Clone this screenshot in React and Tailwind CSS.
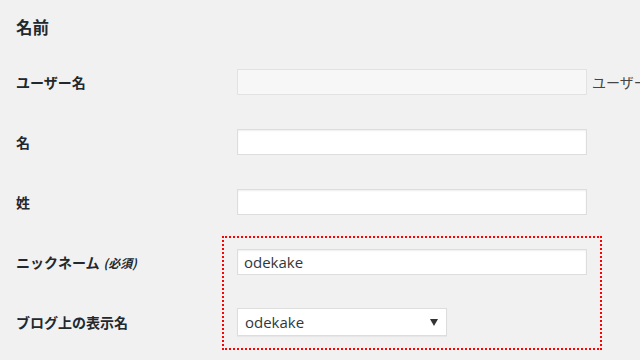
export default function App() {
  const rows = [
    { label: 'ユーザー名', kind: 'disabled' },
    { label: '名', kind: 'text', value: '' },
    { label: '姓', kind: 'text', value: '' },
    { label: 'ニックネーム', required: true, kind: 'text', value: 'odekake' },
    { label: 'ブログ上の表示名', kind: 'select', value: 'odekake' },
  ];

  return (
    <div
      className="relative w-[640px] h-[360px] overflow-hidden bg-[#f1f1f1] text-[#23282d]"
      style={{ fontFamily: '"Noto Sans CJK JP", "Open Sans", sans-serif' }}
    >
      <h2 className="pt-[15px] pb-[13px] pl-4 text-[16.5px] leading-6 font-bold">名前</h2>

      {rows.map((row) => (
        <div key={row.label} className="flex items-center h-[60px] whitespace-nowrap">
          <div className="w-[237px] shrink-0 pl-4 text-[14px] font-bold">
            {row.label}
            {row.required && (
              <span className="ml-1 text-[12px] italic font-bold">(必須)</span>
            )}
          </div>

          {row.kind === 'disabled' && (
            <>
              <div className="w-[350px] h-[26px] shrink-0 border border-[#e2e2e2] bg-[#f7f7f7]" />
              <span className="ml-[5px] text-[14px] text-[#444]">ユーザー名は変更できません。</span>
            </>
          )}

          {row.kind === 'text' && (
            <div
              className="w-[350px] h-[26px] shrink-0 flex items-center px-[6px] border border-[#ddd] bg-white shadow-[inset_0_1px_2px_rgba(0,0,0,0.07)] text-[15px] text-[#32373c]"
              style={{ fontFamily: '"Open Sans", "Noto Sans CJK JP", sans-serif' }}
            >
              {row.value}
            </div>
          )}

          {row.kind === 'select' && (
            <div
              className="w-[210px] h-[28px] shrink-0 flex items-center justify-between pl-[7px] pr-[8px] border border-[#ddd] bg-white shadow-[0_1px_1px_rgba(0,0,0,0.04)] text-[15px] text-[#32373c]"
              style={{ fontFamily: '"Open Sans", "Noto Sans CJK JP", sans-serif' }}
            >
              <span>{row.value}</span>
              <svg width="8" height="7" viewBox="0 0 8 7">
                <path d="M0 0 H8 L4 7 Z" fill="#333" />
              </svg>
            </div>
          )}
        </div>
      ))}

      {/* annotation overlay */}
      <div className="absolute left-[222px] top-[236px] w-[380px] h-[114px] border-2 border-dotted border-[#f00]" />
    </div>
  );
}
